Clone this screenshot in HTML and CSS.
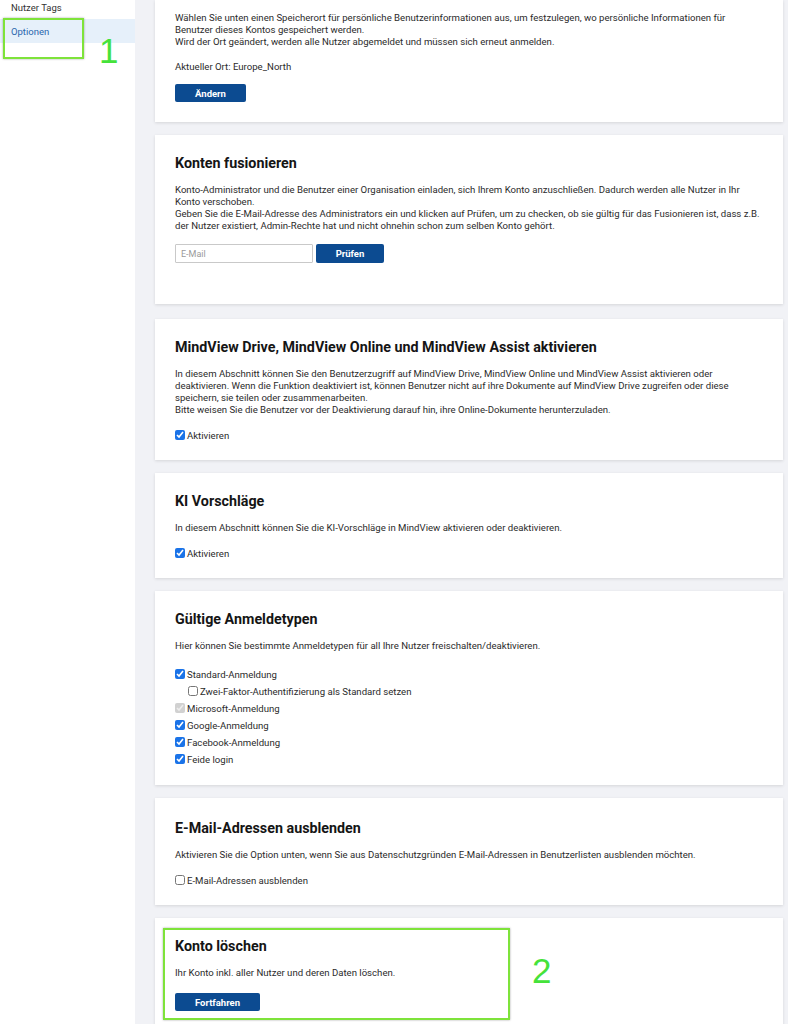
FILE: index.html
```html
<!DOCTYPE html>
<html lang="de">
<head>
<meta charset="utf-8">
<title>Optionen</title>
<link rel="stylesheet" href="styles.css">
</head>
<body>
<div class="app">
  <aside class="sidebar">
    <ul class="nav">
      <li class="nav-item">Nutzer Tags</li>
      <li class="nav-item active">Optionen</li>
    </ul>
  </aside>
  <main class="main">
    <section class="card card-first">
      <p class="text">Wählen Sie unten einen Speicherort für persönliche Benutzerinformationen aus, um festzulegen, wo persönliche Informationen für Benutzer dieses Kontos gespeichert werden.<br>Wird der Ort geändert, werden alle Nutzer abgemeldet und müssen sich erneut anmelden.</p>
      <p class="text text-gap">Aktueller Ort: Europe_North</p>
      <button class="btn btn-change">Ändern</button>
    </section>

    <section class="card card-merge">
      <h2 class="card-title">Konten fusionieren</h2>
      <p class="text">Konto-Administrator und die Benutzer einer Organisation einladen, sich Ihrem Konto anzuschließen. Dadurch werden alle Nutzer in Ihr Konto verschoben.<br>Geben Sie die E-Mail-Adresse des Administrators ein und klicken auf Prüfen, um zu checken, ob sie gültig für das Fusionieren ist, dass z.B. der Nutzer existiert, Admin-Rechte hat und nicht ohnehin schon zum selben Konto gehört.</p>
      <div class="merge-row">
        <input class="input" type="text" placeholder="E-Mail">
        <button class="btn btn-check">Prüfen</button>
      </div>
    </section>

    <section class="card">
      <h2 class="card-title">MindView Drive, MindView Online und MindView Assist aktivieren</h2>
      <p class="text">In diesem Abschnitt können Sie den Benutzerzugriff auf MindView Drive, MindView Online und MindView Assist aktivieren oder deaktivieren. Wenn die Funktion deaktiviert ist, können Benutzer nicht auf ihre Dokumente auf MindView Drive zugreifen oder diese speichern, sie teilen oder zusammenarbeiten.<br>Bitte weisen Sie die Benutzer vor der Deaktivierung darauf hin, ihre Online-Dokumente herunterzuladen.</p>
      <div class="checks">
        <label class="check"><input type="checkbox" checked><span>Aktivieren</span></label>
      </div>
    </section>

    <section class="card">
      <h2 class="card-title">KI Vorschläge</h2>
      <p class="text">In diesem Abschnitt können Sie die KI-Vorschläge in MindView aktivieren oder deaktivieren.</p>
      <div class="checks">
        <label class="check"><input type="checkbox" checked><span>Aktivieren</span></label>
      </div>
    </section>

    <section class="card card-logins">
      <h2 class="card-title">Gültige Anmeldetypen</h2>
      <p class="text">Hier können Sie bestimmte Anmeldetypen für all Ihre Nutzer freischalten/deaktivieren.</p>
      <div class="checks checks-list">
        <label class="check"><input type="checkbox" checked><span>Standard-Anmeldung</span></label>
        <label class="check check-sub"><input type="checkbox"><span>Zwei-Faktor-Authentifizierung als Standard setzen</span></label>
        <label class="check"><input type="checkbox" checked disabled><span>Microsoft-Anmeldung</span></label>
        <label class="check"><input type="checkbox" checked><span>Google-Anmeldung</span></label>
        <label class="check"><input type="checkbox" checked><span>Facebook-Anmeldung</span></label>
        <label class="check"><input type="checkbox" checked><span>Feide login</span></label>
      </div>
    </section>

    <section class="card card-email">
      <h2 class="card-title">E-Mail-Adressen ausblenden</h2>
      <p class="text">Aktivieren Sie die Option unten, wenn Sie aus Datenschutzgründen E-Mail-Adressen in Benutzerlisten ausblenden möchten.</p>
      <div class="checks">
        <label class="check"><input type="checkbox"><span>E-Mail-Adressen ausblenden</span></label>
      </div>
    </section>

    <section class="card card-delete">
      <h2 class="card-title">Konto löschen</h2>
      <p class="text">Ihr Konto inkl. aller Nutzer und deren Daten löschen.</p>
      <button class="btn btn-continue">Fortfahren</button>
    </section>
  </main>
</div>

<div class="mark mark-box-1"></div>
<div class="mark-num mark-num-1">1</div>
<div class="mark mark-box-2"></div>
<div class="mark-num mark-num-2">2</div>
</body>
</html>
```

FILE: styles.css
```css
* { box-sizing: border-box; }

html, body {
  margin: 0;
  padding: 0;
  height: 100%;
}

body {
  font-family: Roboto, "Liberation Sans", Arial, sans-serif;
  color: #2b2b2b;
  background: #f1f2f6;
  overflow: hidden;
  position: relative;
}

.app {
  display: flex;
  min-height: 1024px;
}

.sidebar {
  width: 135px;
  flex: none;
  background: #ffffff;
}

.nav {
  list-style: none;
  margin: -5px 0 0;
  padding: 0;
}

.nav-item {
  height: 24px;
  display: flex;
  align-items: center;
  padding-left: 11px;
  font-size: 9.5px;
  color: #333;
}

.nav-item.active {
  background: #e6f0fa;
  color: #2a66ad;
}

.main {
  flex: 1;
  padding: 0 5px 0 20px;
  display: flex;
  flex-direction: column;
  gap: 13px;
}

.card {
  background: #fff;
  box-shadow: 0 1px 3px rgba(0, 0, 0, 0.12);
  padding: 19px 19px 18px 20px;
}

.card-first {
  padding-top: 12px;
  padding-bottom: 20px;
}

.card-merge {
  padding-bottom: 41px;
  margin-bottom: 2px;
}

.card-logins {
  padding-bottom: 19px;
}

.card-email {
  padding-top: 21px;
}

.card-delete {
  flex: 1;
}

.card-title {
  margin: 0 0 12px;
  font-size: 14.3px;
  line-height: 18px;
  font-weight: 700;
  color: #151515;
}

.text {
  margin: 0;
  font-size: 9.6px;
  line-height: 12px;
  color: #2b2b2b;
}

.text-gap {
  margin-top: 13px;
}

.btn {
  display: block;
  height: 18px;
  border: none;
  border-radius: 2px;
  background: #0c4b91;
  color: #fff;
  font-family: inherit;
  font-size: 9.5px;
  font-weight: 700;
  padding: 0;
  cursor: pointer;
}

.btn-change {
  width: 71px;
  margin-top: 11px;
}

.merge-row {
  display: flex;
  gap: 3px;
  margin-top: 12px;
}

.input {
  width: 138px;
  height: 19px;
  border: 1px solid #c9c9c9;
  border-radius: 1px;
  padding: 0 5px;
  font-family: inherit;
  font-size: 9px;
  color: #333;
}

.input::placeholder { color: #9a9a9a; }

.btn-check {
  width: 68px;
  height: 19px;
}

.btn-continue {
  width: 85px;
  margin-top: 14px;
}

.checks {
  margin-top: 12px;
  display: flex;
  flex-direction: column;
}

.checks-list {
  margin-top: 15px;
  gap: 3px;
}

.check {
  display: flex;
  align-items: center;
  gap: 2px;
  height: 14px;
  font-size: 9.6px;
  color: #2b2b2b;
}

.check input {
  width: 10px;
  height: 10px;
  margin: 0;
  accent-color: #1a73e8;
}

.check-sub {
  padding-left: 13px;
}

.mark {
  position: absolute;
  border: 2.5px solid #7ee33a;
  box-shadow: 0 0 2px rgba(0, 0, 0, 0.35);
}

.mark-box-1 {
  left: 3px;
  top: 18px;
  width: 81px;
  height: 41px;
}

.mark-box-2 {
  left: 163px;
  top: 928px;
  width: 347px;
  height: 92px;
}

.mark-num {
  position: absolute;
  font-family: "Liberation Sans", Arial, sans-serif;
  font-size: 35px;
  line-height: 1;
  color: #45e23a;
}

.mark-num-1 {
  left: 99px;
  top: 33px;
}

.mark-num-2 {
  left: 532px;
  top: 953px;
}
```
